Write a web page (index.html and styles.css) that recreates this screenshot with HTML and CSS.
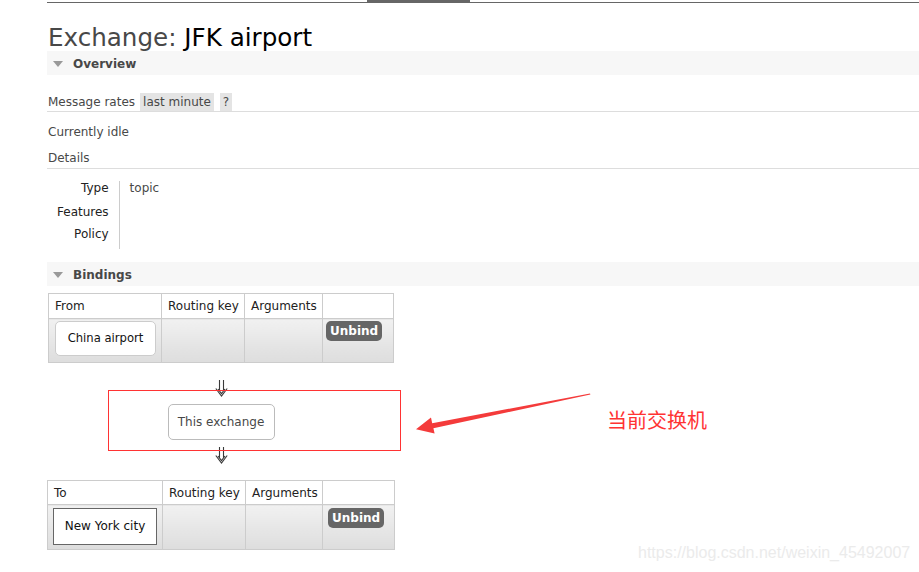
FILE: index.html
```html
<!DOCTYPE html>
<html lang="en">
<head>
    <meta charset="UTF-8">
    <title>Exchange: JFK airport</title>
    <link rel="stylesheet" href="styles.css">
</head>
<body>
    <div class="topnav"><span class="tab"></span></div>

    <main class="page">
        <h1><span class="muted">Exchange:</span> JFK airport</h1>

        <div class="section-head"><span class="caret"></span>Overview</div>
        <div class="rates">
            <span>Message rates</span>
            <span class="tag">last minute</span>
            <span class="tag tag-help">?</span>
        </div>
        <p class="idle">Currently idle</p>
        <h3 class="subhead">Details</h3>

        <table class="facts">
            <tr class="first"><th>Type</th><td>topic</td></tr>
            <tr><th>Features</th><td></td></tr>
            <tr><th>Policy</th><td></td></tr>
        </table>

        <div class="section-head bindings-head"><span class="caret"></span>Bindings</div>

        <table class="bindings first">
            <tr>
                <th class="col-name">From</th>
                <th class="col-key">Routing key</th>
                <th class="col-args">Arguments</th>
                <th class="col-act"></th>
            </tr>
            <tr>
                <td><span class="node">China airport</span></td>
                <td></td>
                <td></td>
                <td><button class="unbind">Unbind</button></td>
            </tr>
        </table>

        <div class="flow">
            <svg class="down" width="13" height="17" viewBox="0 0 13 17">
                <path d="M4.5 0 V10.5 M8.5 0 V10.5 M0.8 8.5 L6.5 16 L12.2 8.5 M3 9 L6.5 13.6 L10 9" fill="none" stroke="#3a3a3a" stroke-width="1.1"/>
            </svg>
            <div class="node node-self">This exchange</div>
            <svg class="down down-2" width="13" height="17" viewBox="0 0 13 17">
                <path d="M4.5 0 V10.5 M8.5 0 V10.5 M0.8 8.5 L6.5 16 L12.2 8.5 M3 9 L6.5 13.6 L10 9" fill="none" stroke="#3a3a3a" stroke-width="1.1"/>
            </svg>
        </div>

        <table class="bindings second">
            <tr>
                <th class="col-name">To</th>
                <th class="col-key">Routing key</th>
                <th class="col-args">Arguments</th>
                <th class="col-act"></th>
            </tr>
            <tr>
                <td><span class="node node-dest">New York city</span></td>
                <td></td>
                <td></td>
                <td><button class="unbind">Unbind</button></td>
            </tr>
        </table>
    </main>

    <!-- annotation drawn over the screenshot -->
    <div class="mark-box"></div>
    <svg class="mark-arrow" width="200" height="60" viewBox="410 385 200 60">
        <polygon fill="#f43b3b" points="590,393.6 432.2,423.2 431,417.6 416,429.2 434.6,433.6 433.4,428.2 590.4,394.6"/>
    </svg>
    <div class="mark-label">当前交换机</div>
    <div class="watermark">https://blog.csdn.net/weixin_45492007</div>
</body>
</html>
```

FILE: styles.css
```css
body {
    margin: 0;
    font-family: "DejaVu Sans", Verdana, sans-serif;
    font-size: 12px;
    color: #484848;
    background: #fff;
}

.topnav {
    height: 2px;
    margin-left: 47px;
    border-bottom: 1px solid #666;
}

.topnav .tab {
    display: block;
    width: 103px;
    height: 2px;
    margin-left: 320px;
    background: #666;
}

.page {
    padding-left: 47px;
}

h1 {
    margin: 0;
    padding: 21px 0 0 1px;
    height: 27px;
    line-height: 27px;
    font-size: 24.6px;
    font-weight: normal;
    color: #000;
}

h1 .muted {
    color: #484848;
}

.section-head {
    height: 22px;
    padding: 2px 0 0 6px;
    line-height: 22px;
    background: #f7f7f7;
    font-weight: bold;
    color: #484848;
}

.caret {
    display: inline-block;
    width: 0;
    height: 0;
    border-left: 5px solid transparent;
    border-right: 5px solid transparent;
    border-top: 6px solid #999;
    margin-right: 10px;
    vertical-align: 1px;
}

.rates {
    display: flex;
    align-items: flex-start;
    margin-top: 17px;
    padding: 1px 0 0 1px;
    height: 18px;
    line-height: 18px;
    border-bottom: 1px solid #ddd;
}

.tag {
    background: #e4e4e4;
    padding: 0 3px;
    margin-left: 5px;
    height: 18px;
}

.tag-help {
    margin-left: 6px;
}

.idle {
    margin: 13px 0 0;
    padding-left: 1px;
    line-height: 15px;
}

.subhead {
    margin: 11px 0 0;
    padding: 0 0 2px 1px;
    line-height: 15px;
    font-size: 12px;
    font-weight: normal;
    border-bottom: 1px solid #ddd;
}

.facts {
    border-collapse: collapse;
    margin-top: 12px;
}

.facts th {
    width: 51px;
    text-align: right;
    font-weight: normal;
    color: #222;
    padding: 0 10px 7px;
    line-height: 15px;
    border-right: 1px solid #ccc;
    vertical-align: top;
}

.facts td {
    padding: 0 10px 7px;
    line-height: 15px;
    vertical-align: top;
}

.facts tr.first th,
.facts tr.first td {
    padding-bottom: 9px;
}

.bindings-head {
    margin-top: 13px;
}

.bindings {
    border-collapse: collapse;
    table-layout: fixed;
    width: 345px;
}

.bindings.first {
    margin-top: 7px;
    margin-left: 1px;
}

.bindings.second {
    width: 347px;
}

.bindings th {
    height: 24px;
    padding: 0 6px;
    border: 1px solid #ccc;
    background: #fff;
    color: #222;
    font-weight: normal;
    text-align: left;
    white-space: nowrap;
}

.bindings.second th {
    height: 23px;
}

.bindings td {
    height: 39px;
    padding: 2px 6px 2px 6px;
    border: 1px solid #ccc;
    background: linear-gradient(#f1f1f1, #dddddd);
    vertical-align: top;
}

.bindings td:last-child {
    padding-left: 3px;
}

.bindings.second td {
    height: 39px;
    padding: 3px 6px 2px 5px;
}

.bindings.second td:last-child {
    padding-left: 5px;
}

.col-name { width: 100px; }
.col-key { width: 70px; }
.col-args { width: 65px; }
.col-act { width: 58px; }

.second .col-name { width: 102px; }
.second .col-args { width: 64px; }
.second .col-act { width: 59px; }

.node {
    display: block;
    box-sizing: border-box;
    width: 101px;
    height: 35px;
    line-height: 33px;
    border: 1px solid #ccc;
    border-radius: 5px;
    background: #fff;
    color: #111;
    text-align: center;
    font-size: 11.6px;
}

.node-dest {
    width: 104px;
    height: 37px;
    line-height: 35px;
    border-color: #666;
    border-radius: 0;
    font-size: 12px;
}

.unbind {
    display: block;
    height: 20px;
    padding: 0 4px;
    border: 0;
    border-radius: 5px;
    background: #666;
    color: #fff;
    font-family: "DejaVu Sans", Verdana, sans-serif;
    font-size: 12px;
    font-weight: bold;
    line-height: 20px;
}

.flow {
    width: 346px;
    margin-left: 1px;
    display: flex;
    flex-direction: column;
    align-items: center;
    padding-top: 17px;
}

.down {
    display: block;
}

.node-self {
    width: 107px;
    height: 36px;
    line-height: 34px;
    margin-top: 7px;
    border-color: #bbb;
    color: #484848;
    font-size: 12px;
}

.down-2 {
    margin-top: 7px;
    margin-bottom: 16px;
}

.mark-box {
    position: absolute;
    left: 108px;
    top: 390px;
    width: 291px;
    height: 59px;
    border: 1px solid #f33;
}

.mark-arrow {
    position: absolute;
    left: 410px;
    top: 385px;
}

.mark-label {
    position: absolute;
    left: 607px;
    top: 408px;
    font-family: "Noto Sans CJK SC", sans-serif;
    font-size: 20px;
    line-height: 24px;
    color: #f33;
}

.watermark {
    position: absolute;
    left: 638px;
    top: 543px;
    font-family: "Liberation Sans", Arial, sans-serif;
    font-size: 16px;
    line-height: 20px;
    color: #ebebeb;
}
```
